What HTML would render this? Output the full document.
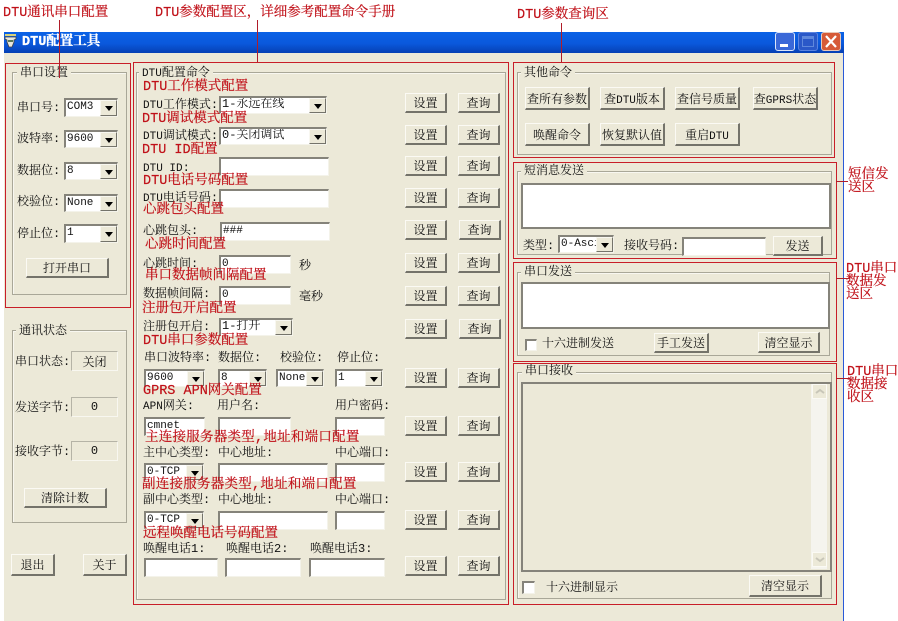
<!DOCTYPE html>
<html lang="zh"><head><meta charset="utf-8"><title>DTU配置工具</title>
<style>
*{box-sizing:border-box}
html,body{margin:0;padding:0;background:#fff}
body{position:relative;width:898px;height:621px;overflow:hidden;font:12px "Liberation Mono","Noto Serif CJK SC",monospace;color:#111}
div{position:absolute}
.m{font-size:11px}
.w{left:4px;top:53px;width:840px;height:568px;background:#ece9d8;border-right:1px solid #2a5ad8}
.tb{left:4px;top:32px;width:840px;height:21px;background:linear-gradient(#0a62e6,#0a58dc 55%,#0640b4)}
.t{line-height:16px;margin-top:-7px;white-space:nowrap;font-size:12px}
.r{line-height:16px;margin-top:-7px;white-space:nowrap;font-size:13.5px;color:#c01018;-webkit-text-stroke:.2px #c01018}
.rb{border:1px solid #c81e28}
.ln{background:#b01c28}
.g{border:1px solid #a9a798;box-shadow:inset 1px 1px 0 #f8f7f0}
.gl{background:#ece9d8;padding:0 3px;line-height:14px;margin-top:-6px;white-space:nowrap;font-size:12px}
.b{display:flex;align-items:center;justify-content:center;background:#ece9d8;border:1px solid;border-color:#fbfaf4 #74736a #74736a #fbfaf4;border-width:1px 2px 2px 1px;font-size:12px;white-space:nowrap}
.i{background:#fff;border:solid;border-color:#85837a #f4f3ea #f4f3ea #85837a;border-width:2px 1px 1px 2px;font-size:12px;line-height:13px;padding-left:1px;white-space:nowrap;overflow:hidden}
.a{right:0;top:0;bottom:0;width:17px;background:#ece9d8;border:1px solid;border-color:#f8f7f0 #74736a #74736a #f8f7f0}
.a:after{content:"";position:absolute;left:4px;top:5px;border:4px solid transparent;border-top:5px solid #000;border-bottom:0}
.f{background:#ece9d8;border:1px solid;border-color:#b5b3a6 #f8f7f0 #f8f7f0 #b5b3a6;display:flex;align-items:center;justify-content:center;font-size:12px}
.ck{background:#fff;border:solid;border-color:#85837a #f4f3ea #f4f3ea #85837a;border-width:2px 1px 1px 2px}
</style></head><body>
<div class="w"></div>
<div class="tb"></div>
<svg style="position:absolute;left:4px;top:32px" width="14" height="17" viewBox="0 0 14 17"><path d="M1 2h11v2H1z" fill="#d8d27a"/><path d="M1 5h11v2l-2 1v2l-2 5H5L3 10V8L1 7z" fill="#e8e8e0" stroke="#444" stroke-width=".8"/><path d="M4 8h5v2H4z" fill="#5a7a5a"/></svg>
<div class="t" style="left:22px;top:42px;color:#fff;font-weight:bold;font-size:13.5px;-webkit-text-stroke:.3px #fff">DTU配置工具</div>
<div style="left:775px;top:32px;width:20px;height:19px;background:#3a68d8;border:1px solid #dbe6fa;border-radius:3px"><div style="left:4px;top:11px;width:8px;height:3px;background:#fff"></div></div>
<div style="left:798px;top:32px;width:20px;height:19px;background:#2a58c8;border:1px solid #5a84e0;border-radius:3px"><div style="left:3px;top:3px;width:12px;height:11px;border:1px solid #5f88dc;border-top-width:3px"></div></div>
<div style="left:821px;top:32px;width:20px;height:19px;background:#d65a38;border:1px solid #e8c8b8;border-radius:3px"><svg style="position:absolute;left:3px;top:2px" width="12" height="13"><path d="M1 1l10 11M11 1L1 12" stroke="#fff" stroke-width="2.2"/></svg></div>

<!-- groups -->
<div class="g" style="left:12px;top:72px;width:115px;height:223px"></div><div class="gl" style="left:17px;top:72px">串口设置</div>
<div class="g" style="left:12px;top:330px;width:115px;height:193px"></div><div class="gl" style="left:16px;top:330px">通讯状态</div>
<div class="g" style="left:136px;top:72px;width:370px;height:528px"></div><div class="gl" style="left:139px;top:72px"><span class="m">DTU</span>配置命令</div>
<div class="g" style="left:517px;top:72px;width:315px;height:83px"></div><div class="gl" style="left:521px;top:72px">其他命令</div>
<div class="g" style="left:517px;top:171px;width:315px;height:84px"></div><div class="gl" style="left:521px;top:170px">短消息发送</div>
<div class="g" style="left:517px;top:272px;width:313px;height:84px"></div><div class="gl" style="left:521px;top:271px">串口发送</div>
<div class="g" style="left:517px;top:372px;width:315px;height:227px"></div><div class="gl" style="left:522px;top:370px">串口接收</div>

<!-- left panel -->
<div class="t" style="left:17px;top:107px">串口号:</div><div class="i" style="left:64px;top:98px;width:54px;height:19px"><span class="m">COM3</span><div class="a"></div></div>
<div class="t" style="left:17px;top:138px">波特率:</div><div class="i" style="left:64px;top:130px;width:54px;height:18px"><span class="m">9600</span><div class="a"></div></div>
<div class="t" style="left:17px;top:170px">数据位:</div><div class="i" style="left:64px;top:162px;width:54px;height:18px"><span class="m">8</span><div class="a"></div></div>
<div class="t" style="left:17px;top:201px">校验位:</div><div class="i" style="left:64px;top:194px;width:54px;height:18px"><span class="m">None</span><div class="a"></div></div>
<div class="t" style="left:17px;top:233px">停止位:</div><div class="i" style="left:64px;top:224px;width:54px;height:19px"><span class="m">1</span><div class="a"></div></div>
<div class="b" style="left:26px;top:258px;width:83px;height:20px">打开串口</div>
<div class="t" style="left:15px;top:361px">串口状态:</div><div class="f" style="left:71px;top:351px;width:47px;height:20px">关闭</div>
<div class="t" style="left:15px;top:407px">发送字节:</div><div class="f" style="left:71px;top:397px;width:47px;height:20px">0</div>
<div class="t" style="left:15px;top:451px">接收字节:</div><div class="f" style="left:71px;top:441px;width:47px;height:20px">0</div>
<div class="b" style="left:24px;top:488px;width:83px;height:20px">清除计数</div>
<div class="b" style="left:11px;top:554px;width:44px;height:22px">退出</div>
<div class="b" style="left:83px;top:554px;width:44px;height:22px">关于</div>

<!-- center labels -->
<div class="t" style="left:143px;top:104px"><span class="m">DTU</span>工作模式:</div>
<div class="t" style="left:143px;top:135px"><span class="m">DTU</span>调试模式:</div>
<div class="t" style="left:143px;top:167px"><span class="m">DTU ID</span>:</div>
<div class="t" style="left:143px;top:197px"><span class="m">DTU</span>电话号码:</div>
<div class="t" style="left:143px;top:230px">心跳包头:</div>
<div class="t" style="left:143px;top:263px">心跳时间:</div>
<div class="t" style="left:143px;top:293px">数据帧间隔:</div>
<div class="t" style="left:143px;top:326px">注册包开启:</div>
<div class="t" style="left:144px;top:357px">串口波特率:</div><div class="t" style="left:218px;top:357px">数据位:</div><div class="t" style="left:280px;top:357px">校验位:</div><div class="t" style="left:337px;top:357px">停止位:</div>
<div class="t" style="left:143px;top:405px"><span class="m">APN</span>网关:</div><div class="t" style="left:217px;top:405px">用户名:</div><div class="t" style="left:335px;top:405px">用户密码:</div>
<div class="t" style="left:143px;top:452px">主中心类型:</div><div class="t" style="left:218px;top:452px">中心地址:</div><div class="t" style="left:335px;top:452px">中心端口:</div>
<div class="t" style="left:143px;top:499px">副中心类型:</div><div class="t" style="left:218px;top:499px">中心地址:</div><div class="t" style="left:335px;top:499px">中心端口:</div>
<div class="t" style="left:143px;top:548px">唤醒电话1:</div><div class="t" style="left:226px;top:548px">唤醒电话2:</div><div class="t" style="left:310px;top:548px">唤醒电话3:</div>
<div class="t" style="left:299px;top:265px">秒</div>
<div class="t" style="left:299px;top:296px">毫秒</div>

<!-- center inputs -->
<div class="i" style="left:219px;top:96px;width:108px;height:18px">1-永远在线<div class="a"></div></div>
<div class="i" style="left:219px;top:127px;width:108px;height:18px">0-关闭调试<div class="a"></div></div>
<div class="i" style="left:219px;top:157px;width:110px;height:19px"></div>
<div class="i" style="left:219px;top:189px;width:110px;height:19px"></div>
<div class="i" style="left:220px;top:222px;width:110px;height:19px"><span class="m">###</span></div>
<div class="i" style="left:219px;top:255px;width:72px;height:19px"><span class="m">0</span></div>
<div class="i" style="left:219px;top:286px;width:72px;height:19px"><span class="m">0</span></div>
<div class="i" style="left:219px;top:318px;width:74px;height:18px">1-打开<div class="a"></div></div>
<div class="i" style="left:144px;top:369px;width:61px;height:18px"><span class="m">9600</span><div class="a"></div></div>
<div class="i" style="left:218px;top:369px;width:49px;height:18px"><span class="m">8</span><div class="a"></div></div>
<div class="i" style="left:276px;top:369px;width:48px;height:18px"><span class="m">None</span><div class="a"></div></div>
<div class="i" style="left:335px;top:369px;width:48px;height:18px"><span class="m">1</span><div class="a"></div></div>
<div class="i" style="left:144px;top:417px;width:61px;height:19px"><span class="m">cmnet</span></div>
<div class="i" style="left:218px;top:417px;width:73px;height:19px"></div>
<div class="i" style="left:335px;top:417px;width:50px;height:19px"></div>
<div class="i" style="left:144px;top:463px;width:60px;height:18px"><span class="m">0-TCP</span><div class="a"></div></div>
<div class="i" style="left:218px;top:463px;width:110px;height:19px"></div>
<div class="i" style="left:335px;top:463px;width:50px;height:19px"></div>
<div class="i" style="left:144px;top:511px;width:60px;height:18px"><span class="m">0-TCP</span><div class="a"></div></div>
<div class="i" style="left:218px;top:511px;width:110px;height:19px"></div>
<div class="i" style="left:335px;top:511px;width:50px;height:19px"></div>
<div class="i" style="left:144px;top:558px;width:74px;height:19px"></div>
<div class="i" style="left:225px;top:558px;width:76px;height:19px"></div>
<div class="i" style="left:309px;top:558px;width:76px;height:19px"></div>

<!-- center buttons -->
<div class="b" style="left:405px;top:93px;width:42px;height:20px">设置</div><div class="b" style="left:458px;top:93px;width:42px;height:20px">查询</div>
<div class="b" style="left:405px;top:125px;width:42px;height:20px">设置</div><div class="b" style="left:458px;top:125px;width:42px;height:20px">查询</div>
<div class="b" style="left:405px;top:156px;width:42px;height:20px">设置</div><div class="b" style="left:458px;top:156px;width:42px;height:20px">查询</div>
<div class="b" style="left:405px;top:188px;width:42px;height:20px">设置</div><div class="b" style="left:458px;top:188px;width:42px;height:20px">查询</div>
<div class="b" style="left:405px;top:220px;width:42px;height:20px">设置</div><div class="b" style="left:459px;top:220px;width:42px;height:20px">查询</div>
<div class="b" style="left:405px;top:253px;width:42px;height:20px">设置</div><div class="b" style="left:458px;top:253px;width:42px;height:20px">查询</div>
<div class="b" style="left:405px;top:286px;width:42px;height:20px">设置</div><div class="b" style="left:458px;top:286px;width:42px;height:20px">查询</div>
<div class="b" style="left:405px;top:319px;width:42px;height:20px">设置</div><div class="b" style="left:459px;top:319px;width:42px;height:20px">查询</div>
<div class="b" style="left:405px;top:368px;width:42px;height:20px">设置</div><div class="b" style="left:458px;top:368px;width:42px;height:20px">查询</div>
<div class="b" style="left:405px;top:416px;width:42px;height:20px">设置</div><div class="b" style="left:458px;top:416px;width:42px;height:20px">查询</div>
<div class="b" style="left:405px;top:462px;width:42px;height:20px">设置</div><div class="b" style="left:458px;top:462px;width:42px;height:20px">查询</div>
<div class="b" style="left:405px;top:510px;width:42px;height:20px">设置</div><div class="b" style="left:458px;top:510px;width:42px;height:20px">查询</div>
<div class="b" style="left:405px;top:556px;width:42px;height:20px">设置</div><div class="b" style="left:458px;top:556px;width:42px;height:20px">查询</div>

<!-- other commands -->
<div class="b" style="left:525px;top:87px;width:65px;height:23px">查所有参数</div>
<div class="b" style="left:600px;top:87px;width:65px;height:23px"><span>查<span class="m">DTU</span>版本</span></div>
<div class="b" style="left:675px;top:87px;width:65px;height:23px">查信号质量</div>
<div class="b" style="left:753px;top:87px;width:65px;height:23px"><span>查<span class="m">GPRS</span>状态</span></div>
<div class="b" style="left:525px;top:123px;width:65px;height:23px">唤醒命令</div>
<div class="b" style="left:600px;top:123px;width:65px;height:23px">恢复默认值</div>
<div class="b" style="left:675px;top:123px;width:65px;height:23px"><span>重启<span class="m">DTU</span></span></div>

<!-- SMS -->
<div class="i" style="left:521px;top:183px;width:310px;height:46px;border-width:2px;border-color:#85837a"></div>
<div class="t" style="left:523px;top:245px">类型:</div>
<div class="i" style="left:558px;top:235px;width:56px;height:18px"><span class="m">0-Asci</span><div class="a"></div></div>
<div class="t" style="left:624px;top:245px">接收号码:</div>
<div class="i" style="left:682px;top:237px;width:84px;height:19px"></div>
<div class="b" style="left:773px;top:236px;width:50px;height:20px">发送</div>

<!-- serial send -->
<div class="i" style="left:521px;top:282px;width:309px;height:47px;border-width:2px;border-color:#85837a"></div>
<div class="ck" style="left:525px;top:339px;width:12px;height:12px"></div>
<div class="t" style="left:542px;top:343px">十六进制发送</div>
<div class="b" style="left:654px;top:333px;width:55px;height:20px">手工发送</div>
<div class="b" style="left:758px;top:332px;width:62px;height:21px">清空显示</div>

<!-- serial receive -->
<div style="left:521px;top:382px;width:311px;height:190px;background:#ece9d8;border:2px solid #85837a"></div>
<div style="left:811px;top:384px;width:16px;height:185px;background:#f5f4ee"></div>
<div style="left:812px;top:384px;width:15px;height:15px;background:#ece9d8;border:1px solid #fbfaf4"><svg style="position:absolute;left:2px;top:3px" width="10" height="7"><path d="M1 5l4-3 4 3" fill="none" stroke="#c8c6b8" stroke-width="2"/></svg></div>
<div style="left:812px;top:552px;width:15px;height:15px;background:#ece9d8;border:1px solid #fbfaf4"><svg style="position:absolute;left:2px;top:3px" width="10" height="7"><path d="M1 2l4 3 4-3" fill="none" stroke="#c8c6b8" stroke-width="2"/></svg></div>
<div class="ck" style="left:522px;top:581px;width:13px;height:13px"></div>
<div class="t" style="left:546px;top:587px">十六进制显示</div>
<div class="b" style="left:749px;top:575px;width:73px;height:22px">清空显示</div>

<!-- red boxes -->
<div class="rb" style="left:5px;top:63px;width:126px;height:245px"></div>
<div class="rb" style="left:133px;top:62px;width:376px;height:543px"></div>
<div class="rb" style="left:513px;top:62px;width:322px;height:96px"></div>
<div class="rb" style="left:513px;top:162px;width:324px;height:97px"></div>
<div class="rb" style="left:513px;top:262px;width:324px;height:100px"></div>
<div class="rb" style="left:513px;top:363px;width:324px;height:242px"></div>

<!-- center red -->
<div class="r" style="left:143px;top:87px">DTU工作模式配置</div>
<div class="r" style="left:142px;top:119px">DTU调试模式配置</div>
<div class="r" style="left:142px;top:150px">DTU ID配置</div>
<div class="r" style="left:143px;top:181px">DTU电话号码配置</div>
<div class="r" style="left:143px;top:210px">心跳包头配置</div>
<div class="r" style="left:145px;top:245px">心跳时间配置</div>
<div class="r" style="left:145px;top:276px">串口数据帧间隔配置</div>
<div class="r" style="left:142px;top:309px">注册包开启配置</div>
<div class="r" style="left:143px;top:341px">DTU串口参数配置</div>
<div class="r" style="left:143px;top:391px">GPRS APN网关配置</div>
<div class="r" style="left:145px;top:438px;letter-spacing:.25px">主连接服务器类型,地址和端口配置</div>
<div class="r" style="left:142px;top:485px;letter-spacing:.25px">副连接服务器类型,地址和端口配置</div>
<div class="r" style="left:143px;top:534px">远程唤醒电话号码配置</div>

<!-- annotations -->
<div class="r" style="left:3px;top:13px">DTU通讯串口配置</div>
<div class="r" style="left:155px;top:13px">DTU参数配置区，详细参考配置命令手册</div>
<div class="r" style="left:517px;top:15px">DTU参数查询区</div>
<div class="r" style="left:848px;top:175px">短信发</div><div class="r" style="left:848px;top:188px">送区</div>
<div class="r" style="left:846px;top:269px">DTU串口</div><div class="r" style="left:846px;top:282px">数据发</div><div class="r" style="left:846px;top:295px">送区</div>
<div class="r" style="left:847px;top:372px">DTU串口</div><div class="r" style="left:847px;top:385px">数据接</div><div class="r" style="left:847px;top:398px">收区</div>
<div class="ln" style="left:59px;top:20px;width:1px;height:58px"></div>
<div class="ln" style="left:257px;top:20px;width:1px;height:42px"></div>
<div class="ln" style="left:561px;top:23px;width:1px;height:39px"></div>
<div class="ln" style="left:836px;top:181px;width:12px;height:1px"></div>
<div class="ln" style="left:836px;top:278px;width:14px;height:1px"></div>
<div class="ln" style="left:836px;top:378px;width:14px;height:1px"></div>
</body></html>
